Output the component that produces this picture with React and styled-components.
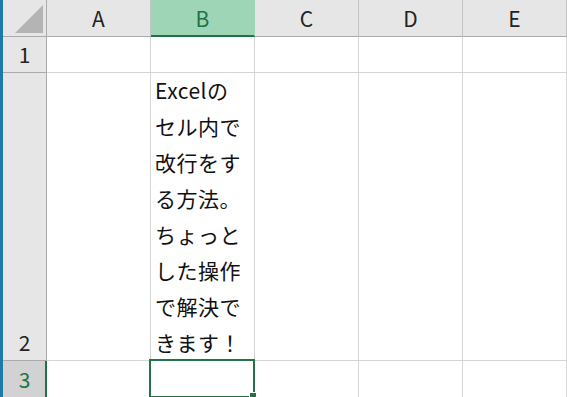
import React from 'react'
import styled, { createGlobalStyle, css } from 'styled-components'

const Global = createGlobalStyle`
  html, body { margin: 0; padding: 0; background: #ffffff; overflow: hidden; }
  body { font-family: "Noto Sans CJK JP", "Noto Sans", sans-serif; }
`

const Window = styled.div`
  display: flex;
  width: 567px;
  height: 397px;
  overflow: hidden;
`

const Strip = styled.div`
  width: 3px;
  background: #1b7aa6;
  flex: none;
`

const Sheet = styled.div`
  display: grid;
  grid-template-columns: 44px 104px 104px 104px 104px 104px;
  grid-template-rows: 37px 36px 288px 37px;
  flex: 1;
`

const Corner = styled.div`
  background: #e6e6e6;
  border-right: 1px solid #ababab;
  border-bottom: 1px solid #ababab;
  position: relative;
`

const Triangle = styled.div`
  position: absolute;
  left: 12px;
  top: 5px;
  width: 28px;
  height: 28px;
  background: #b4b4b4;
  clip-path: polygon(100% 0, 100% 100%, 0 100%);
`

const ColHead = styled.div`
  background: ${p => (p.$active ? '#9fd5b7' : '#e6e6e6')};
  color: ${p => (p.$active ? '#217346' : '#222')};
  border-right: 1px solid ${p => (p.$active ? '#9fd5b7' : '#c4c4c4')};
  border-bottom: ${p => (p.$active ? '2px solid #217346' : '1px solid #ababab')};
  display: flex;
  align-items: center;
  justify-content: center;
  font-size: 21px;
  padding-bottom: ${p => (p.$active ? '0' : '1px')};
  box-sizing: border-box;
`

const RowHead = styled.div`
  background: ${p => (p.$active ? '#d2d2d2' : '#e6e6e6')};
  color: ${p => (p.$active ? '#217346' : '#222')};
  border-right: ${p => (p.$active ? '2px solid #217346' : '1px solid #ababab')};
  border-bottom: 1px solid #ababab;
  display: flex;
  align-items: flex-end;
  justify-content: center;
  font-size: 21px;
  line-height: 36px;
  box-sizing: border-box;
  ${p => p.$active && css`padding-left: 1px;`}
`

const Cell = styled.div`
  border-right: 1px solid #d4d4d4;
  border-bottom: 1px solid #d4d4d4;
  position: relative;
  display: flex;
  align-items: flex-end;
  padding-left: 4px;
  font-size: 21px;
  line-height: 36px;
  color: #111;
  letter-spacing: 0.5px;
  white-space: pre-line;
`

const Selection = styled.div`
  position: absolute;
  left: -2px;
  top: -2px;
  right: -1px;
  bottom: -1px;
  border: 2px solid #217346;
  pointer-events: none;
`

const Handle = styled.div`
  position: absolute;
  right: -3px;
  bottom: -3px;
  width: 6px;
  height: 6px;
  background: #217346;
  border: 1px solid #fff;
  border-right: none;
  border-bottom: none;
`

const cols = ['A', 'B', 'C', 'D', 'E']
const text = 'Excelの\nセル内で\n改行をす\nる方法。\nちょっと\nした操作\nで解決で\nきます！'

const App = () => {
  return (
    <>
      <Global />
      <Window>
        <Strip />
        <Sheet>
          <Corner><Triangle /></Corner>
          {cols.map(c => (
            <ColHead key={c} $active={c === 'B'}>{c}</ColHead>
          ))}
          {[1, 2, 3].map(r => (
            <React.Fragment key={r}>
              <RowHead $active={r === 3}>{r}</RowHead>
              {cols.map(c => (
                <Cell key={c}>
                  {r === 2 && c === 'B' && text}
                  {r === 3 && c === 'B' && (
                    <Selection><Handle /></Selection>
                  )}
                </Cell>
              ))}
            </React.Fragment>
          ))}
        </Sheet>
      </Window>
    </>
  )
}

export default App
